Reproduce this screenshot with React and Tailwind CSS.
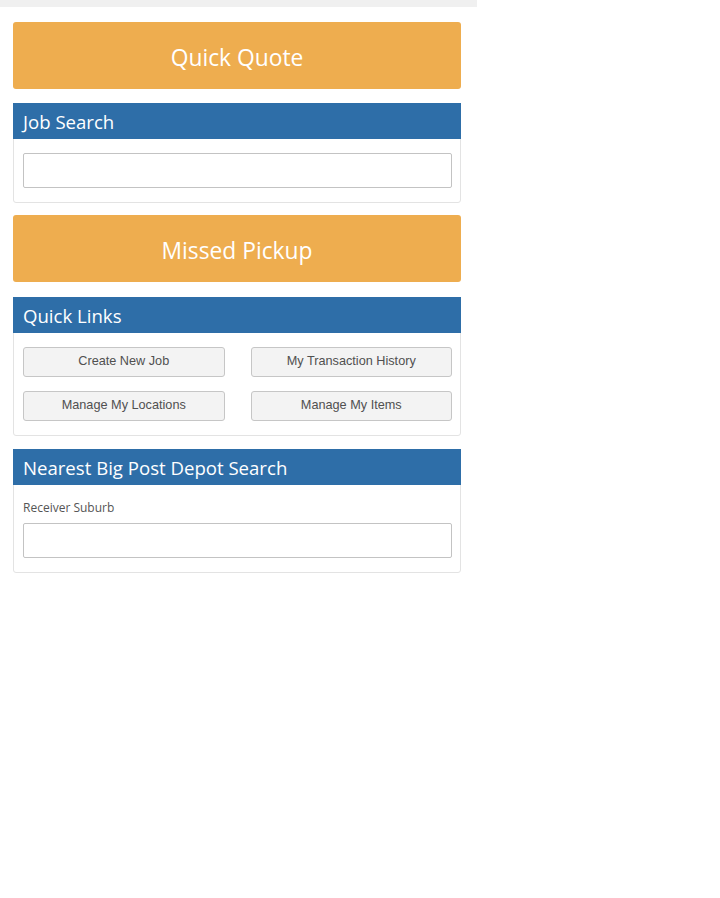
export default function App() {
  const head = { fontFamily: '"Open Sans", "Noto Sans", sans-serif' };
  const btn = { fontFamily: '"Liberation Sans", Arial, sans-serif' };
  const Panel = ({ title, className = "", children }) => (
    <div className={"rounded-[3px] border border-[#e3e3e3] bg-white " + className}>
      <div className="-mx-px -mt-px flex h-[36px] items-center bg-[#2e6ea8] pl-[10px] pt-[2px] text-[18.6px] text-white" style={head}>
        {title}
      </div>
      <div className="pb-[14px] pl-[9px] pr-[8px] pt-[14px]">{children}</div>
    </div>
  );
  const Btn = ({ children }) => (
    <div
      className="flex h-[30px] items-center justify-center rounded-[3px] border border-[#c6c6c6] bg-[#f3f3f3] text-[12.7px] text-[#505050]"
      style={btn}
    >
      {children}
    </div>
  );
  const Input = () => <div className="h-[35px] rounded-[2px] border border-[#c3c3c3] bg-white" />;
  return (
    <div className="min-h-[898px] w-[720px] bg-white">
      <div className="h-[7px] w-[477px] bg-[#f0f0f0]" />
      <div className="ml-[13px] flex w-[448px] flex-col">
        <div
          className="mt-[15px] flex h-[67px] items-center justify-center rounded-[3px] bg-[#eead4f] pt-[5px] text-[22.8px] text-white"
          style={head}
        >
          Quick Quote
        </div>
        <Panel title="Job Search" className="mt-[14px]">
          <Input />
        </Panel>
        <div
          className="mt-[12px] flex h-[67px] items-center justify-center rounded-[3px] bg-[#eead4f] pt-[5px] text-[22.8px] text-white"
          style={head}
        >
          Missed Pickup
        </div>
        <Panel title="Quick Links" className="mt-[15px]">
          <div className="grid grid-cols-2 gap-x-[26px] gap-y-[14px]">
            <Btn>Create New Job</Btn>
            <Btn>My Transaction History</Btn>
            <Btn>Manage My Locations</Btn>
            <Btn>Manage My Items</Btn>
          </div>
        </Panel>
        <Panel title="Nearest Big Post Depot Search" className="mt-[13px]">
          <div className="mb-[7px] h-[17px] text-[12px] leading-[17px] text-[#555]" style={head}>
            Receiver Suburb
          </div>
          <Input />
        </Panel>
      </div>
    </div>
  );
}
